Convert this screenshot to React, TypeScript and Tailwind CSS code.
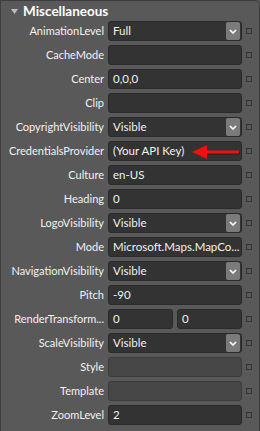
import React from "react"

type Row = {
  label: string
  value?: string
  kind?: "text" | "select" | "pair" | "disabled"
}

const rows: Row[] = [
  { label: "AnimationLevel", value: "Full", kind: "select" },
  { label: "CacheMode" },
  { label: "Center", value: "0,0,0" },
  { label: "Clip" },
  { label: "CopyrightVisibility", value: "Visible", kind: "select" },
  { label: "CredentialsProvider", value: "(Your API Key)" },
  { label: "Culture", value: "en-US" },
  { label: "Heading", value: "0" },
  { label: "LogoVisibility", value: "Visible", kind: "select" },
  { label: "Mode", value: "Microsoft.Maps.MapCo..." },
  { label: "NavigationVisibility", value: "Visible", kind: "select" },
  { label: "Pitch", value: "-90" },
  { label: "RenderTransform...", kind: "pair" },
  { label: "ScaleVisibility", value: "Visible", kind: "select" },
  { label: "Style", kind: "disabled" },
  { label: "Template", kind: "disabled" },
  { label: "ZoomLevel", value: "2" },
]

function Box({ children, disabled, className = "" }: { children?: React.ReactNode; disabled?: boolean; className?: string }) {
  return (
    <div
      className={`h-5 rounded-[3px] border flex items-center pl-[4px] pr-px overflow-hidden whitespace-nowrap ${
        disabled ? "bg-[#474747] border-[#3c3c3c]" : "bg-[#333333] border-[#2a2a2a]"
      } ${className}`}
    >
      {children}
    </div>
  )
}

function Chevron() {
  return (
    <div className="ml-auto w-[14px] h-[18px] shrink-0 rounded-[2px] bg-[#7b7b7b] flex items-center justify-center">
      <svg width="8" height="5" viewBox="0 0 8 5">
        <path d="M1 1l3 3 3-3" fill="none" stroke="#ffffff" strokeWidth="1.6" />
      </svg>
    </div>
  )
}

export default function App() {
  return (
    <div className="w-[260px] h-[431px] bg-[#595959] overflow-hidden" style={{ fontFamily: "Lato, 'Noto Sans', sans-serif" }}>
      <div className="relative h-full border-l border-t border-r border-[#3e3e3e] rounded-tr-[5px] text-[11px] text-[#f2f2f2]">
        {/* Header */}
        <div className="h-[20px] flex items-center pl-[10px]">
          <svg width="7" height="5" viewBox="0 0 7 5" className="mr-[5px]">
            <path d="M0 0h7L3.5 5z" fill="#bdbdbd" />
          </svg>
          <span className="font-bold text-[13.5px] text-white">Miscellaneous</span>
        </div>

        <div className="flex flex-col gap-1">
          {rows.map((r) => (
            <div key={r.label} className="flex items-center h-5">
              <div className="w-[107px] pr-[4px] text-right whitespace-nowrap overflow-hidden">{r.label}</div>
              <div className="w-[134px] flex gap-1 text-[11.5px]">
                {r.kind === "pair" ? (
                  <>
                    <Box className="flex-1">0</Box>
                    <Box className="flex-1">0</Box>
                  </>
                ) : (
                  <Box className="flex-1" disabled={r.kind === "disabled"}>
                    <span>{r.value}</span>
                    {r.kind === "select" && <Chevron />}
                  </Box>
                )}
              </div>
              <div className="ml-[4px] w-[6px] h-[6px] border border-[#353535]" />
            </div>
          ))}
        </div>

        {/* red arrow pointing at API key */}
        <svg className="absolute left-[190px] top-[143px]" width="50" height="16" viewBox="0 0 50 16">
          <path d="M48 8H12" stroke="#1a1a1a" strokeOpacity="0.4" strokeWidth="3" transform="translate(1,1.5)" />
          <path d="M48 8H12" stroke="#ee1111" strokeWidth="3" />
          <path d="M1 8l15-7v14z" fill="#ee1111" />
        </svg>
      </div>
    </div>
  )
}
